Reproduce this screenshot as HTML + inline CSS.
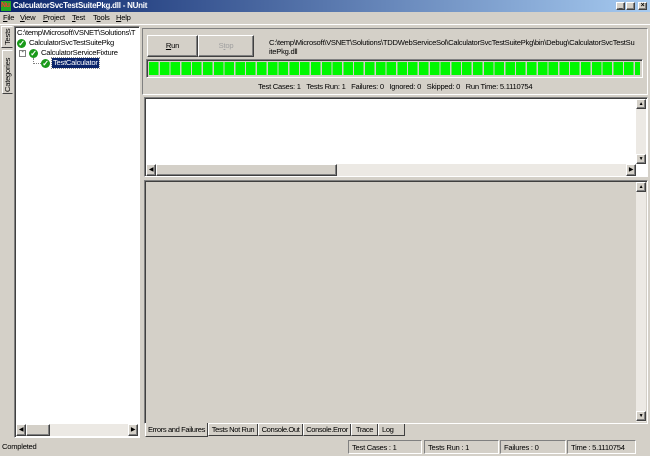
<!DOCTYPE html><html><head><style>
*{margin:0;padding:0;box-sizing:border-box}
body{width:650px;height:456px;background:#d4d0c8;font-family:"Liberation Sans",sans-serif;font-size:7.6px;letter-spacing:-0.25px;color:#000;position:relative;overflow:hidden}
.a{position:absolute;white-space:nowrap}
.sunk{border:1px solid;border-color:#808080 #fff #fff #808080;box-shadow:inset 1px 1px 0 #404040}
.btn{border:1px solid;border-color:#fff #404040 #404040 #fff;box-shadow:inset -1px -1px 0 #808080;background:#d4d0c8;text-align:center}
.chk{width:9px;height:9px;border-radius:50%;background:#1a9a1a;color:#fff;font-size:8px;line-height:9px;text-align:center;font-weight:bold}
.tab{border:1px solid;border-color:#fff #404040 #404040 #fff;border-top:none;height:12px;line-height:11px;background:#d4d0c8;top:424px;text-align:center;overflow:hidden;letter-spacing:-0.4px}
.stat{border:1px solid;border-color:#808080 #fff #fff #808080;top:440px;height:14px;line-height:13px;padding-left:3px}
</style></head><body>
<div class="a" style="left:0;top:0;width:650px;height:12px;background:linear-gradient(90deg,#0a246a,#a6caf0)"></div>
<div class="a" style="left:1px;top:1px;width:10px;height:10px;background:#2a2;color:#f33;font-size:7px;font-weight:bold;line-height:10px">Nu</div>
<div class="a" style="left:13px;top:0;color:#fff;font-weight:bold;font-size:8px;line-height:12px">CalculatorSvcTestSuitePkg.dll - NUnit</div>
<div class="a btn" style="left:616px;top:2px;width:9px;height:8px;font-size:6px;line-height:6px">_</div>
<div class="a btn" style="left:626px;top:2px;width:9px;height:8px"></div>
<div class="a btn" style="left:638px;top:2px;width:9px;height:8px;font-size:7px;line-height:6px;font-weight:bold">×</div>
<div class="a" style="left:3px;top:13px;line-height:10px"><u>F</u>ile</div>
<div class="a" style="left:20px;top:13px;line-height:10px"><u>V</u>iew</div>
<div class="a" style="left:43px;top:13px;line-height:10px"><u>P</u>roject</div>
<div class="a" style="left:72px;top:13px;line-height:10px"><u>T</u>est</div>
<div class="a" style="left:93px;top:13px;line-height:10px">T<u>o</u>ols</div>
<div class="a" style="left:116px;top:13px;line-height:10px"><u>H</u>elp</div>
<div class="a" style="left:0;top:24px;width:650px;height:1px;background:#fff"></div>
<!-- vertical tabs -->
<div class="a" style="left:1px;top:26px;width:12px;height:22px;border:1px solid;border-color:#fff #d4d0c8 #404040 #fff;"></div>
<div class="a" style="left:3px;top:45px;transform:rotate(-90deg);transform-origin:0 0;line-height:9px">Tests</div>
<div class="a" style="left:2px;top:50px;width:11px;height:44px;border:1px solid;border-color:#fff #d4d0c8 #404040 #fff;"></div>
<div class="a" style="left:3px;top:92px;transform:rotate(-90deg);transform-origin:0 0;line-height:9px">Categories</div>
<!-- tree -->
<div class="a sunk" style="left:14px;top:26px;width:126px;height:412px;background:#fff"></div>
<div class="a" style="left:17px;top:28px;width:120px;overflow:hidden;line-height:10px">C:\temp\Microsoft\VSNET\Solutions\T</div>
<div class="a chk" style="left:17px;top:39px">✓</div>
<div class="a" style="left:29px;top:38px;line-height:10px">CalculatorSvcTestSuitePkg</div>
<div class="a" style="left:19px;top:50px;width:7px;height:7px;border:1px solid #808080;font-size:7px;line-height:4px;text-align:center">-</div>
<div class="a chk" style="left:29px;top:49px">✓</div>
<div class="a" style="left:41px;top:48px;line-height:10px">CalculatorServiceFixture</div>
<div class="a" style="left:33px;top:58px;width:8px;height:6px;border-left:1px dotted #808080;border-bottom:1px dotted #808080"></div>
<div class="a chk" style="left:41px;top:59px">✓</div>
<div class="a" style="left:52px;top:58px;line-height:10px;background:#0a246a;color:#fff;padding:0 1px;outline:1px dotted #888">TestCalculator</div>
<div class="a" style="left:16px;top:424px;width:122px;height:12px;background:#ece9e4"></div>
<div class="a btn" style="left:16px;top:424px;width:10px;height:12px;font-size:6px;line-height:10px">◀</div>
<div class="a btn" style="left:26px;top:424px;width:24px;height:12px"></div>
<div class="a btn" style="left:128px;top:424px;width:10px;height:12px;font-size:6px;line-height:10px">▶</div>
<!-- top right panel -->
<div class="a" style="left:142px;top:28px;width:506px;height:67px;border:1px solid;border-color:#808080 #fff #fff #808080"></div>
<div class="a btn" style="left:147px;top:35px;width:51px;height:22px;line-height:20px"><u>R</u>un</div>
<div class="a btn" style="left:198px;top:35px;width:56px;height:22px;line-height:20px;color:#a0a0a0">S<u>t</u>op</div>
<div class="a" style="left:269px;top:38px;line-height:9px">C:\temp\Microsoft\VSNET\Solutions\TDDWebServiceSol\CalculatorSvcTestSuitePkg\bin\Debug\CalculatorSvcTestSu<br>itePkg.dll</div>
<div class="a sunk" style="left:146px;top:59px;width:497px;height:19px;background:#d4d0c8;padding:2px"><div style="width:100%;height:100%;background:repeating-linear-gradient(90deg,#00f800 0 9.5px,#d4d0c8 9.5px 10.8px)"></div></div>
<div class="a" style="left:258px;top:82px;line-height:10px">Test Cases: 1 &nbsp;&nbsp;Tests Run: 1 &nbsp;&nbsp;Failures: 0 &nbsp;&nbsp;Ignored: 0 &nbsp;&nbsp;Skipped: 0 &nbsp;&nbsp;Run Time: 5.1110754</div>
<!-- upper text -->
<div class="a sunk" style="left:144px;top:97px;width:504px;height:80px;background:#fff"></div>
<div class="a" style="left:146px;top:99px;width:490px;height:65px;background:#fff"></div>
<div class="a" style="left:636px;top:99px;width:10px;height:65px;background:#ece9e4"></div>
<div class="a btn" style="left:636px;top:99px;width:10px;height:10px;font-size:5px;line-height:8px">▲</div>
<div class="a btn" style="left:636px;top:154px;width:10px;height:10px;font-size:5px;line-height:8px">▼</div>
<div class="a" style="left:146px;top:164px;width:490px;height:12px;background:#ece9e4"></div>
<div class="a btn" style="left:146px;top:164px;width:10px;height:12px;font-size:6px;line-height:10px">◀</div>
<div class="a btn" style="left:156px;top:164px;width:181px;height:12px"></div>
<div class="a btn" style="left:626px;top:164px;width:10px;height:12px;font-size:6px;line-height:10px">▶</div>
<!-- lower panel -->
<div class="a sunk" style="left:144px;top:180px;width:504px;height:244px;background:#d4d0c8"></div>
<div class="a" style="left:636px;top:182px;width:10px;height:240px;background:#ece9e4"></div>
<div class="a btn" style="left:636px;top:182px;width:10px;height:10px;font-size:5px;line-height:8px">▲</div>
<div class="a btn" style="left:636px;top:411px;width:10px;height:10px;font-size:5px;line-height:8px">▼</div>
<div class="a tab" style="left:145px;top:423px;width:63px;height:14px;line-height:14px">Errors and Failures</div>
<div class="a tab" style="left:208px;width:50px">Tests Not Run</div>
<div class="a tab" style="left:258px;width:45px">Console.Out</div>
<div class="a tab" style="left:303px;width:48px">Console.Error</div>
<div class="a tab" style="left:351px;width:27px">Trace</div>
<div class="a tab" style="left:378px;width:27px;text-align:left;padding-left:3px">Log</div>
<!-- status -->
<div class="a" style="left:2px;top:442px;line-height:10px">Completed</div>
<div class="a stat" style="left:348px;width:74px">Test Cases : 1</div>
<div class="a stat" style="left:424px;width:75px">Tests Run : 1</div>
<div class="a stat" style="left:500px;width:66px">Failures : 0</div>
<div class="a stat" style="left:567px;width:69px">Time : 5.1110754</div>
</body></html>
